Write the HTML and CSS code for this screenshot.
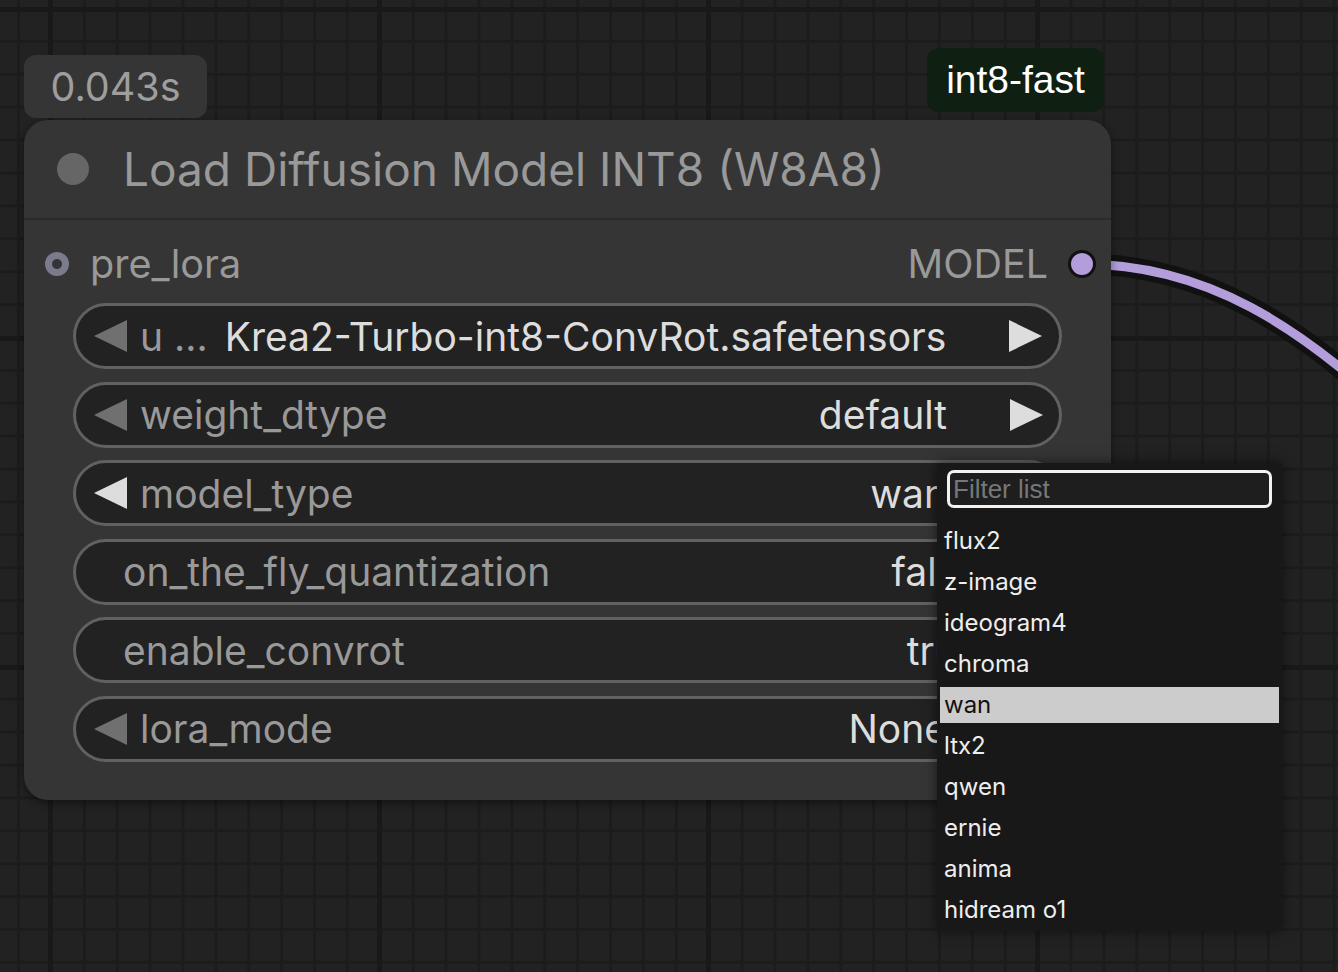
FILE: index.html
```html
<!DOCTYPE html>
<html lang="en">
<head>
    <meta charset="UTF-8">
    <title>Load Diffusion Model INT8 (W8A8)</title>
    <link rel="stylesheet" href="styles.css">
</head>
<body>
    <div class="canvas">
        <!-- links sit under the nodes -->
        <svg class="links" width="1338" height="972" viewBox="0 0 1338 972">
            <path class="link-shadow" d="M1082 264 C1200 264 1300 320 1420 440"/>
            <path class="link-model" d="M1082 264 C1200 264 1300 320 1420 440"/>
        </svg>

        <div class="node">
            <div class="badge badge-time">0.043s</div>
            <div class="badge badge-tag">int8-fast</div>

            <div class="node-title">
                <span class="title-dot"></span>
                <span class="title-text">Load Diffusion Model INT8 (W8A8)</span>
            </div>

            <div class="node-body">
                <div class="slots">
                    <div class="slot slot-in"><span class="slot-dot"></span>pre_lora</div>
                    <div class="slot slot-out">MODEL<span class="slot-dot slot-dot-model"></span></div>
                </div>

                <div class="widgets">
                    <div class="widget combo">
                        <svg class="arrow" width="33" height="32" viewBox="0 0 33 32"><polygon points="33,0 33,32 0,16"/></svg>
                        <span class="w-label">u …</span>
                        <span class="w-value w-value-long">Krea2-Turbo-int8-ConvRot.safetensors</span>
                        <svg class="arrow arrow-right" width="33" height="32" viewBox="0 0 33 32"><polygon points="0,0 0,32 33,16"/></svg>
                    </div>
                    <div class="widget combo">
                        <svg class="arrow" width="33" height="32" viewBox="0 0 33 32"><polygon points="33,0 33,32 0,16"/></svg>
                        <span class="w-label">weight_dtype</span>
                        <span class="w-value">default</span>
                        <svg class="arrow arrow-right" width="33" height="32" viewBox="0 0 33 32"><polygon points="0,0 0,32 33,16"/></svg>
                    </div>
                    <div class="widget combo hover">
                        <svg class="arrow" width="33" height="32" viewBox="0 0 33 32"><polygon points="33,0 33,32 0,16"/></svg>
                        <span class="w-label">model_type</span>
                        <span class="w-value">wan</span>
                        <svg class="arrow arrow-right" width="33" height="32" viewBox="0 0 33 32"><polygon points="0,0 0,32 33,16"/></svg>
                    </div>
                    <div class="widget toggle">
                        <span class="w-label">on_the_fly_quantization</span>
                        <span class="w-value">false</span>
                    </div>
                    <div class="widget toggle">
                        <span class="w-label">enable_convrot</span>
                        <span class="w-value">true</span>
                    </div>
                    <div class="widget combo">
                        <svg class="arrow" width="33" height="32" viewBox="0 0 33 32"><polygon points="33,0 33,32 0,16"/></svg>
                        <span class="w-label">lora_mode</span>
                        <span class="w-value">None</span>
                        <svg class="arrow arrow-right" width="33" height="32" viewBox="0 0 33 32"><polygon points="0,0 0,32 33,16"/></svg>
                    </div>
                </div>
            </div>
        </div>

        <div class="menu">
            <input class="menu-filter" type="text" placeholder="Filter list">
            <ul class="menu-list">
                <li>flux2</li>
                <li>z-image</li>
                <li>ideogram4</li>
                <li>chroma</li>
                <li class="selected">wan</li>
                <li>ltx2</li>
                <li>qwen</li>
                <li>ernie</li>
                <li>anima</li>
                <li>hidream o1</li>
            </ul>
        </div>
    </div>
</body>
</html>
```

FILE: styles.css
```css
body {
    margin: 0;
    background: #222;
}

.canvas {
    position: relative;
    width: 1338px;
    height: 972px;
    overflow: hidden;
    font-family: Inter, "Noto Sans", sans-serif;
    background-color: #222;
    background-image:
        linear-gradient(90deg, #191919 5px, transparent 5px),
        linear-gradient(#191919 5px, transparent 5px),
        linear-gradient(90deg, #1c1c1c 3px, transparent 3px),
        linear-gradient(#1c1c1c 3px, transparent 3px);
    background-size: 329px 329px, 329px 329px, 32.9px 32.9px, 32.9px 32.9px;
    background-position: 48px 0, 0 7px, 17px 0, 0 7px;
}

.links {
    position: absolute;
    left: 0;
    top: 0;
}
.link-shadow {
    fill: none;
    stroke: #111;
    stroke-width: 21;
}
.link-model {
    fill: none;
    stroke: #b39ddb;
    stroke-width: 9;
}

/* node */
.node {
    position: absolute;
    left: 24px;
    top: 120px;
    width: 1087px;
    height: 680px;
    background: #353535;
    border-radius: 24px;
    box-shadow: 0 3px 8px rgba(0, 0, 0, 0.45);
}

.badge {
    position: absolute;
    display: flex;
    align-items: center;
    justify-content: center;
    border-radius: 12px;
}
.badge-time {
    left: 0;
    top: -65px;
    width: 183px;
    height: 63px;
    background: #353535;
    color: #9e9e9e;
    font-size: 39.5px;
}
.badge-tag {
    left: 903px;
    top: -72px;
    width: 177px;
    height: 64px;
    background: #0f1f12;
    color: #fff;
    font-family: "Liberation Sans", Arial, sans-serif;
    font-size: 39px;
}

.node-title {
    display: flex;
    align-items: center;
    height: 98px;
    border-bottom: 2px solid #2b2b2b;
}
.title-dot {
    width: 32px;
    height: 32px;
    margin-left: 33px;
    margin-right: 34px;
    border-radius: 50%;
    background: #666;
}
.title-text {
    color: #999;
    font-size: 46px;
    white-space: nowrap;
}

.slots {
    display: flex;
    justify-content: space-between;
    align-items: center;
    height: 66px;
    margin-top: 11px;
    font-size: 39.5px;
    color: #999;
}
.slot {
    display: flex;
    align-items: center;
}
.slot-in .slot-dot {
    width: 24px;
    height: 24px;
    margin-left: 21px;
    margin-right: 21px;
    border-radius: 50%;
    background: radial-gradient(circle, #353535 0 4.5px, #7b7b8e 5.5px);
}
.slot-dot-model {
    box-sizing: border-box;
    width: 28px;
    height: 28px;
    margin-left: 20px;
    margin-right: 15px;
    border-radius: 50%;
    border: 3px solid #111;
    background: #b39ddb;
}

/* widgets */
.widgets {
    display: flex;
    flex-direction: column;
    gap: 12.6px;
    margin: 6px 49px 0 49px;
}
.widget {
    box-sizing: border-box;
    display: flex;
    align-items: center;
    height: 66px;
    border: 3px solid #616161;
    border-radius: 33px;
    background: #222;
    font-size: 39px;
    white-space: nowrap;
    overflow: hidden;
}
.combo {
    padding: 0 16px 0 18px;
}
.toggle {
    padding: 0 79px 0 47px;
}
.arrow {
    flex: none;
    fill: #707070;
}
.arrow-right {
    margin-left: 63px;
    fill: #ddd;
}
.hover .arrow {
    fill: #ddd;
}
.combo .w-label {
    margin-left: 13px;
}
.w-label {
    color: #999;
}
.w-value {
    margin-left: auto;
    color: #ddd;
}
.w-value-long {
    margin-left: 17px;
}

/* dropdown */
.menu {
    position: absolute;
    left: 937px;
    top: 463px;
    width: 345px;
    box-sizing: border-box;
    padding: 3px;
    background: #181818;
    box-shadow: 0 0 12px rgba(0, 0, 0, 0.55);
}
.menu-filter {
    display: block;
    box-sizing: border-box;
    width: 325px;
    height: 38px;
    margin: 4px 7px 0 7px;
    padding: 0 3px;
    border: 3px solid #f2f2f2;
    border-radius: 7px;
    background: #1e1e1e;
    color: #ddd;
    font-family: "Liberation Sans", Arial, sans-serif;
    font-size: 26px;
    outline: none;
}
.menu-filter::placeholder {
    color: #777;
}
.menu-list {
    list-style: none;
    margin: 15px 0 0 0;
    padding: 0;
}
.menu-list li {
    height: 36px;
    line-height: 36px;
    margin-bottom: 5px;
    padding-left: 4px;
    color: #eee;
    font-size: 24px;
}
.menu-list li:last-child {
    margin-bottom: 0;
}
.menu-list .selected {
    background: #ccc;
    color: #111;
}
```
